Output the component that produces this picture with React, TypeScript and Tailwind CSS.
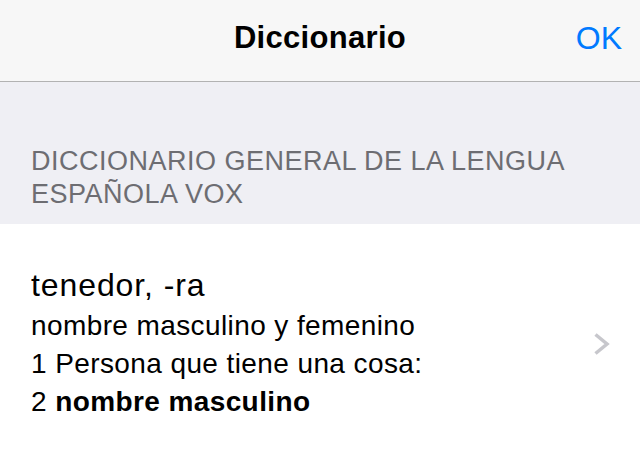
export default function App() {
  return (
    <div className="w-[640px] h-[460px] overflow-hidden bg-white font-['Liberation_Sans',Arial,sans-serif]">
      {/* Nav bar */}
      <div className="h-[82px] bg-[#f7f7f7] border-b border-[#b2b2b2] grid grid-cols-[1fr_auto_1fr] items-start pt-[20px]">
        <div />
        <div className="text-[31px] leading-[36px] font-bold text-black tracking-[0.3px]">Diccionario</div>
        <div className="flex justify-end pr-[18px]">
          <button className="block text-[32px] leading-[36px] text-[#007aff]">OK</button>
        </div>
      </div>

      {/* Section header */}
      <div className="bg-[#efeff4] pt-[63px] pb-[13px] pl-[31px] pr-[20px]">
        <div className="text-[27px] leading-[33px] text-[#6d6d72] uppercase tracking-[0.5px]">
          Diccionario general de la lengua
          <br />
          Española Vox
        </div>
      </div>

      {/* Entry */}
      <div className="flex items-start pt-[42px] pl-[31px] pr-[30px]">
        <div className="flex-1 text-black">
          <div className="text-[32px] leading-[39px] tracking-[0.9px]">tenedor, -ra</div>
          <div className="mt-[2px] text-[28px] leading-[38px] tracking-[0.4px]">
            <div>nombre masculino y femenino</div>
            <div>1 Persona que tiene una cosa:</div>
            <div>
              2 <span className="font-bold">nombre masculino</span>
            </div>
          </div>
        </div>
        <svg width="17" height="24" viewBox="0 0 17 24" className="mt-[66px]">
          <polyline points="2.5,2.5 14,12 2.5,21.5" fill="none" stroke="#c7c7cc" strokeWidth="3.5" />
        </svg>
      </div>
    </div>
  );
}
